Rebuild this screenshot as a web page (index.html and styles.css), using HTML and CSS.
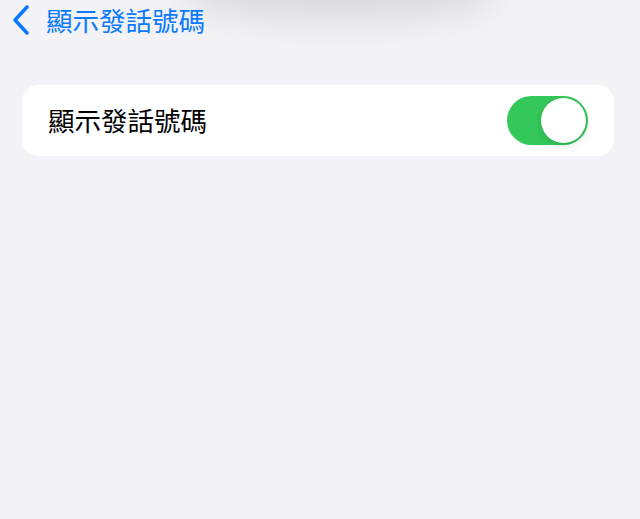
FILE: index.html
```html
<!DOCTYPE html>
<html lang="zh-Hant">
<head>
    <meta charset="UTF-8">
    <meta name="viewport" content="width=device-width, initial-scale=1.0">
    <title>顯示發話號碼</title>
    <link rel="stylesheet" href="styles.css">
</head>
<body>
    <div class="top-shade"></div>
    <div class="nav">
        <svg class="back" width="20" height="32" viewBox="0 0 20 32">
            <path d="M16 3 L4 16 L16 29" fill="none" stroke="#0a7aff" stroke-width="3.6" stroke-linecap="round" stroke-linejoin="round"/>
        </svg>
        <span class="nav-title">顯示發話號碼</span>
    </div>

    <div class="card">
        <span class="label">顯示發話號碼</span>
        <div class="toggle on">
            <div class="knob"></div>
        </div>
    </div>
</body>
</html>
```

FILE: styles.css
```css
body {
    margin: 0;
    background: #f2f2f7;
    font-family: "Noto Sans CJK TC", "Noto Sans", sans-serif;
    height: 519px;
    overflow: hidden;
    position: relative;
}
.top-shade {
    position: absolute;
    left: 180px;
    top: -40px;
    width: 320px;
    height: 60px;
    border-radius: 50%;
    background: rgba(0,0,0,0.10);
    filter: blur(18px);
}
.nav {
    position: relative;
    display: flex;
    align-items: center;
    height: 44px;
    padding-left: 11px;
    margin-top: -2px;
}
.back {
    margin-right: 15px;
}
.nav-title {
    color: #0a7aff;
    font-size: 26.5px;
    line-height: 1;
}
.card {
    display: flex;
    align-items: center;
    justify-content: space-between;
    background: #fff;
    border-radius: 16px;
    margin: 43px 26px 0 22px;
    height: 71px;
    padding: 0 26px 0 26px;
}
.label {
    font-size: 26.5px;
    color: #000;
    line-height: 1;
}
.toggle {
    width: 81px;
    height: 49px;
    border-radius: 25px;
    background: #e9e9ea;
    position: relative;
}
.toggle.on {
    background: #34c759;
}
.knob {
    position: absolute;
    top: 2px;
    right: 2px;
    width: 45px;
    height: 45px;
    border-radius: 50%;
    background: #fff;
    box-shadow: 0 2px 6px rgba(0,0,0,0.15);
}
```
